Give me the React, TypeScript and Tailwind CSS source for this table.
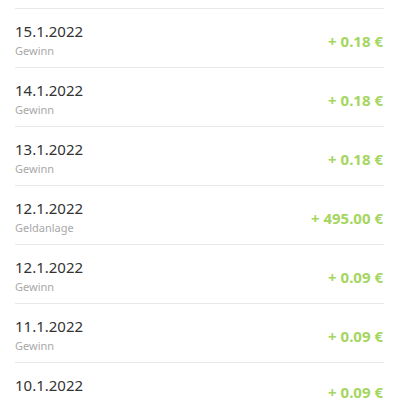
const rows = [
  { date: "15.1.2022", label: "Gewinn", amount: "+ 0.18 €" },
  { date: "14.1.2022", label: "Gewinn", amount: "+ 0.18 €" },
  { date: "13.1.2022", label: "Gewinn", amount: "+ 0.18 €" },
  { date: "12.1.2022", label: "Geldanlage", amount: "+ 495.00 €" },
  { date: "12.1.2022", label: "Gewinn", amount: "+ 0.09 €" },
  { date: "11.1.2022", label: "Gewinn", amount: "+ 0.09 €" },
  { date: "10.1.2022", label: "", amount: "+ 0.09 €" },
]

export default function App() {
  return (
    <div className="w-[400px] h-[400px] overflow-hidden bg-white pt-[8px] font-['Noto_Sans',sans-serif]">
      <div className="ml-[15px] mr-[16px]">
        {rows.map((row, i) => (
          <div key={i} className="flex justify-between items-start h-[59px] border-t border-[#e8e8e8]">
            <div className="pt-[13px]">
              <div className="text-[15px] leading-[18px] text-[#333333]">{row.date}</div>
              {row.label && (
                <div className="mt-[4px] text-[11px] leading-[14px] text-[#a8a8a8]">{row.label}</div>
              )}
            </div>
            <div className={row.label ? "pt-[23px] pr-[1px] text-[15px] leading-[18px] font-bold text-[#a5d661]" : "pt-[20px] pr-[1px] text-[15px] leading-[18px] font-bold text-[#a5d661]"}>
              {row.amount}
            </div>
          </div>
        ))}
      </div>
    </div>
  )
}
